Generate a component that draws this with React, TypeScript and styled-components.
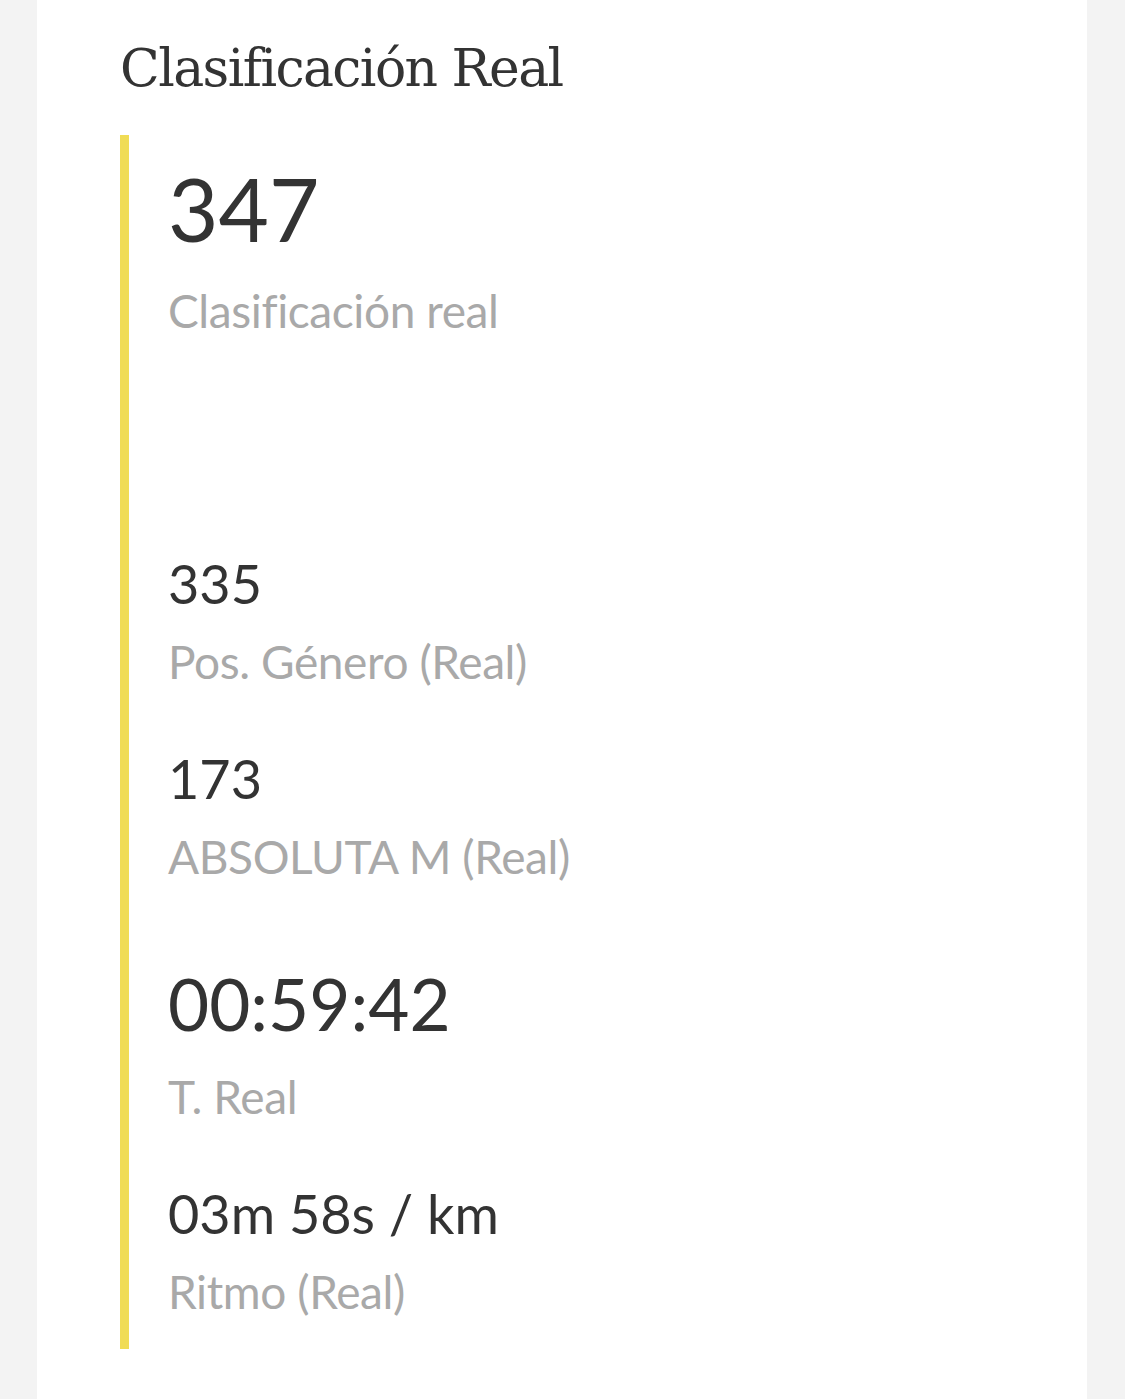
import React from "react";
import styled, { createGlobalStyle } from "styled-components";

const GlobalStyle = createGlobalStyle`
  html, body {
    margin: 0;
    padding: 0;
    background: #f3f3f3;
  }
  body {
    font-family: Lato, "Open Sans", sans-serif;
  }
`;

const Page = styled.div`
  min-height: 1399px;
  display: flex;
  padding-left: 37px;
`;

const Card = styled.section`
  width: 1050px;
  background: #ffffff;
  padding: 0 0 60px 83px;
  box-sizing: border-box;
  min-height: 1399px;
`;

const Title = styled.h2`
  margin: 0;
  padding-top: 42px;
  font-family: "DejaVu Serif", "Liberation Serif", serif;
  font-weight: 400;
  font-size: 52px;
  line-height: 1;
  color: #333333;
  letter-spacing: -1.6px;
`;

const StatList = styled.div`
  margin-top: 41px;
  border-left: 9px solid #f0dc55;
  padding: 30px 0 34px 39px;
  display: flex;
  flex-direction: column;
`;

type Size = "xl" | "lg" | "md";

const valueFont: Record<Size, number> = { xl: 87, lg: 71, md: 54 };
const labelGap: Record<Size, number> = { xl: 36, lg: 35, md: 28 };

const Stat = styled.div<{ $lead: number }>`
  display: flex;
  flex-direction: column;
  margin-top: ${(p) => p.$lead}px;
`;

const Value = styled.div<{ $size: Size }>`
  font-family: Lato, "Open Sans", sans-serif;
  font-size: ${(p) => valueFont[p.$size]}px;
  line-height: 1;
  color: #333333;
  margin-bottom: ${(p) => labelGap[p.$size]}px;
`;

const Label = styled.div`
  font-family: Lato, "Open Sans", sans-serif;
  font-size: 46px;
  line-height: 1;
  color: #a9a9a9;
  letter-spacing: -0.4px;
`;

const stats: { value: string; label: string; size: Size; lead: number }[] = [
  { value: "347", label: "Clasificación real", size: "xl", lead: 0 },
  { value: "335", label: "Pos. Género (Real)", size: "md", lead: 223 },
  { value: "173", label: "ABSOLUTA M (Real)", size: "md", lead: 67 },
  { value: "00:59:42", label: "T. Real", size: "lg", lead: 88 },
  { value: "03m 58s / km", label: "Ritmo (Real)", size: "md", lead: 67 },
];

export default function App() {
  return (
    <>
      <GlobalStyle />
      <Page>
        <Card>
          <Title>Clasificación Real</Title>
          <StatList>
            {stats.map((s) => (
              <Stat key={s.label} $lead={s.lead}>
                <Value $size={s.size}>{s.value}</Value>
                <Label>{s.label}</Label>
              </Stat>
            ))}
          </StatList>
        </Card>
      </Page>
    </>
  );
}
